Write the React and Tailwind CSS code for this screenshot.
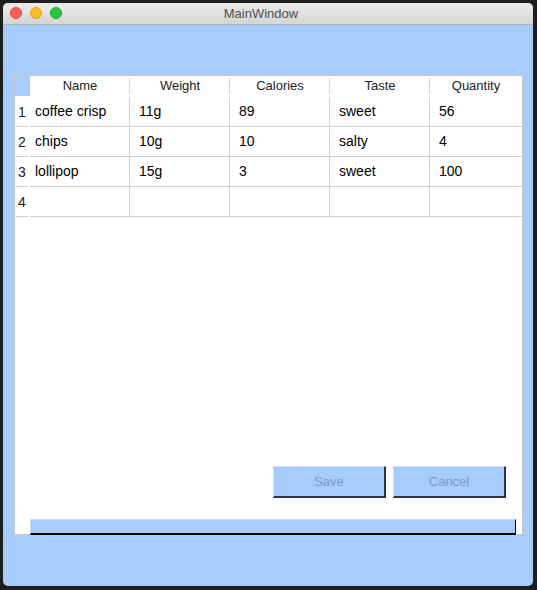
import React from 'react';

// table data shown in the window
const columns = ['Name', 'Weight', 'Calories', 'Taste', 'Quantity'];
const rows = [
  ['coffee crisp', '11g', '89', 'sweet', '56'],
  ['chips', '10g', '10', 'salty', '4'],
  ['lollipop', '15g', '3', 'sweet', '100'],
  ['', '', '', '', ''],
];
const widths = ['w-[100px]', 'w-[100px]', 'w-[100px]', 'w-[100px]', 'flex-1'];

export default function App() {
  return (
    <div className="w-[537px] h-[590px] bg-[#1d1d1f] pt-[3px] pl-[3px] overflow-hidden" style={{ fontFamily: '"Liberation Sans", Arial, sans-serif' }}>
      <div className="w-[530px] h-[583px] rounded-[5px] overflow-hidden flex flex-col bg-[#a7cbfd]">
        {/* title bar */}
        <div className="h-[22px] shrink-0 relative flex items-center justify-center bg-gradient-to-b from-[#ebebeb] to-[#d5d5d5] border-b border-[#b1b1b1]">
          <div className="absolute left-[7px] top-[4px] flex gap-[8px]">
            <span className="w-[12px] h-[12px] rounded-full bg-[#fe5f57] border border-[#e2463f]" />
            <span className="w-[12px] h-[12px] rounded-full bg-[#febc2e] border border-[#e1a116]" />
            <span className="w-[12px] h-[12px] rounded-full bg-[#28c840] border border-[#1aab29]" />
          </div>
          <span className="text-[13px] text-[#4d4d4d] mr-[14px]">MainWindow</span>
        </div>

        {/* table widget */}
        <div className="mt-[50px] ml-[11px] w-[509px] h-[460px] border border-[#c6c6c6] bg-white flex flex-col">
          {/* header */}
          <div className="h-[21px] flex shrink-0">
            <div className="w-[15px] h-[20px] bg-[#a7cbfd]" />
            {columns.map((c, i) => (
              <div key={c} className={`${widths[i]} h-[20px] flex items-center justify-center text-[13px] text-[#222] relative`}>
                {i > 0 && <span className="absolute left-[-1px] top-[2px] h-[16px] w-px bg-[#d4d4d4]" />}
                {c}
              </div>
            ))}
          </div>

          {rows.map((r, ri) => (
            <div key={ri} className="h-[30px] flex">
              <div className="w-[15px] relative flex items-center pl-[3px] text-[14px] text-[#222]">
                {ri + 1}
                <span className="absolute left-[1px] right-[2px] bottom-0 h-px bg-[#d0d0d0]" />
              </div>
              {r.map((v, ci) => (
                <div key={ci} className={`${widths[ci]} flex items-center ${ci === 0 ? 'pl-[5px]' : 'pl-[9px]'} text-[14px] text-black border-b border-[#d0d0d0] ${ci < 4 ? 'border-r' : ''}`}>
                  {v}
                </div>
              ))}
            </div>
          ))}

          <div className="flex-1" />

          {/* buttons */}
          <div className="flex justify-end gap-[7px] pr-[16px]">
            <button className="w-[113px] h-[32px] bg-[#a7cbfd] border border-t-[#c9ddff] border-l-[#c9ddff] border-b-[#2a3442] border-r-[#2a3442] border-b-2 border-r-2 text-[13px] text-[#7f9ac4]">
              Save
            </button>
            <button className="w-[113px] h-[32px] bg-[#a7cbfd] border border-t-[#c9ddff] border-l-[#c9ddff] border-b-[#2a3442] border-r-[#2a3442] border-b-2 border-r-2 text-[13px] text-[#7f9ac4]">
              Cancel
            </button>
          </div>

          {/* bottom bar */}
          <div className="mt-[21px] ml-[15px] w-[486px] h-[16px] bg-[#a7cbfd] border border-t-[#c6dbff] border-l-[#c6dbff] border-b-black border-r-black border-b-2 mb-[-1px]" />
        </div>
      </div>
    </div>
  );
}
